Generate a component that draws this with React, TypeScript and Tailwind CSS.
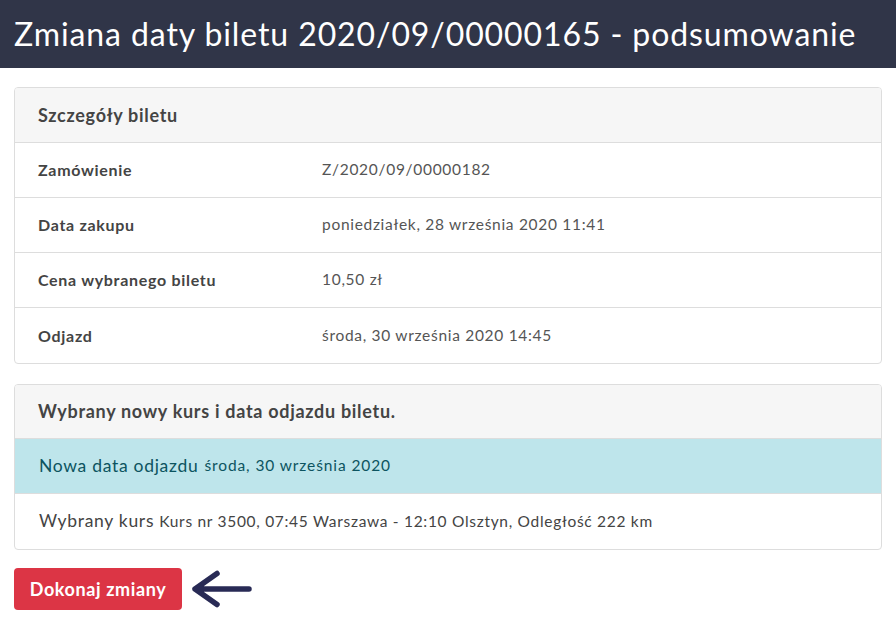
import React from "react";

const rows: [string, string][] = [
  ["Zamówienie", "Z/2020/09/00000182"],
  ["Data zakupu", "poniedziałek, 28 września 2020 11:41"],
  ["Cena wybranego biletu", "10,50 zł"],
  ["Odjazd", "środa, 30 września 2020 14:45"],
];

export default function App() {
  return (
    <div className="min-h-[618px] bg-white text-[#444]" style={{ fontFamily: "Lato, 'Open Sans', sans-serif" }}>
      <div className="h-[68px] bg-[#303548] flex items-center px-[14px]">
        <h1 className="text-[32px] text-white font-normal leading-none tracking-[0.9px]">
          Zmiana daty biletu 2020/09/00000165 - podsumowanie
        </h1>
      </div>
      <div className="px-[14px] pt-[19px]">
        <div className="border border-[#ddd] rounded-[4px] overflow-hidden">
          <div className="h-[55px] bg-[#f6f6f6] border-b border-[#ddd] flex items-center px-[23px] text-[18px] tracking-[0.7px] font-bold text-[#444]">
            Szczegóły biletu
          </div>
          {rows.map(([k, v], i) => (
            <div
              key={k}
              className={`h-[55px] flex items-center px-[23px] ${i < rows.length - 1 ? "border-b border-[#ddd]" : ""}`}
            >
              <div className="w-[284px] shrink-0 text-[16px] tracking-[0.7px] font-bold text-[#444]">{k}</div>
              <div className="text-[15.5px] tracking-[0.7px] text-[#555]">{v}</div>
            </div>
          ))}
        </div>
        <div className="mt-[20px] border border-[#ddd] rounded-[4px] overflow-hidden">
          <div className="h-[54px] bg-[#f6f6f6] border-b border-[#ddd] flex items-center px-[23px] text-[18px] tracking-[0.7px] font-bold text-[#444]">
            Wybrany nowy kurs i data odjazdu biletu.
          </div>
          <div className="h-[55px] bg-[#bee5eb] border-b border-[#ddd] flex items-center px-[24px] text-[#0c5460]">
            <span className="text-[17.5px] tracking-[0.7px]">Nowa data odjazdu</span>
            <span className="text-[15.5px] tracking-[0.9px] ml-[6px]">środa, 30 września 2020</span>
          </div>
          <div className="h-[55px] flex items-center px-[24px] text-[#444] tracking-[0.7px]">
            <span className="text-[17.5px]">Wybrany kurs</span>
            <span className="text-[15.5px] ml-[5px]">Kurs nr 3500, 07:45 Warszawa - 12:10 Olsztyn, Odległość 222 km</span>
          </div>
        </div>
        <div className="mt-[18px] flex items-center gap-[9px]">
          <button className="h-[42px] w-[168px] rounded-[4px] bg-[#dc3545] text-white text-[18px] tracking-[0.6px] font-bold">
            Dokonaj zmiany
          </button>
          <svg width="62" height="40" viewBox="0 0 62 40" fill="none">
            <path d="M58 20 H4 M26 4.5 L4 20 L26 35.5" stroke="#282a55" strokeWidth="5.5" strokeLinecap="round" strokeLinejoin="round" />
          </svg>
        </div>
      </div>
    </div>
  );
}
